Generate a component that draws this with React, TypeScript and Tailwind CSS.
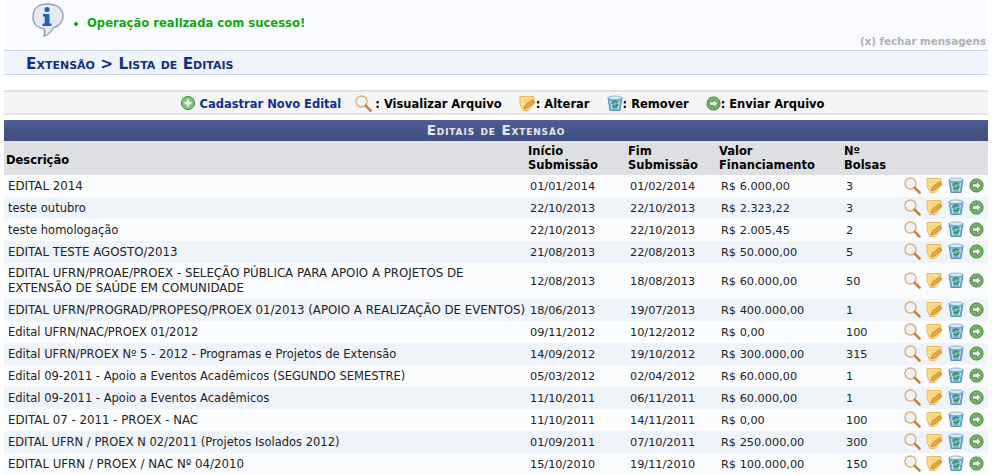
import React from 'react';

const rows = [
    ['EDITAL 2014', '01/01/2014', '01/02/2014', 'R$ 6.000,00', '3'],
    ['teste outubro', '22/10/2013', '22/10/2013', 'R$ 2.323,22', '3'],
    ['teste homologação', '22/10/2013', '22/10/2013', 'R$ 2.005,45', '2'],
    ['EDITAL TESTE AGOSTO/2013', '21/08/2013', '22/08/2013', 'R$ 50.000,00', '5'],
    ['EDITAL UFRN/PROAE/PROEX - SELEÇÃO PÚBLICA PARA APOIO A PROJETOS DE EXTENSÃO DE SAÚDE EM COMUNIDADE', '12/08/2013', '18/08/2013', 'R$ 60.000,00', '50'],
    ['EDITAL UFRN/PROGRAD/PROPESQ/PROEX 01/2013 (APOIO A REALIZAÇÃO DE EVENTOS)', '18/06/2013', '19/07/2013', 'R$ 400.000,00', '1'],
    ['Edital UFRN/NAC/PROEX 01/2012', '09/11/2012', '10/12/2012', 'R$ 0,00', '100'],
    ['Edital UFRN/PROEX Nº 5 - 2012 - Programas e Projetos de Extensão', '14/09/2012', '19/10/2012', 'R$ 300.000,00', '315'],
    ['Edital 09-2011 - Apoio a Eventos Acadêmicos (SEGUNDO SEMESTRE)', '05/03/2012', '02/04/2012', 'R$ 60.000,00', '1'],
    ['Edital 09-2011 - Apoio a Eventos Acadêmicos', '11/10/2011', '06/11/2011', 'R$ 60.000,00', '1'],
    ['EDITAL 07 - 2011 - PROEX - NAC', '11/10/2011', '14/11/2011', 'R$ 0,00', '100'],
    ['EDITAL UFRN / PROEX N 02/2011 (Projetos Isolados 2012)', '01/09/2011', '07/10/2011', 'R$ 250.000,00', '300'],
    ['EDITAL UFRN / PROEX / NAC Nº 04/2010', '15/10/2010', '19/11/2010', 'R$ 100.000,00', '150'],
];

function InfoIcon() {
    return (
        <svg width="34" height="36" viewBox="0 0 34 36">
            <path d="M16 2C7 2 2 7 2 15c0 7 5 11 11 12 1 2 1 5 0 7 4-1 7-4 9-8 6-2 10-6 10-12C32 6 25 2 16 2z" fill="#e4eaf6" stroke="#9aa3b5" strokeWidth="1.5" />
            <circle cx="16" cy="7.5" r="2.6" fill="#1f63ad" />
            <path d="M12 12h6.500v9.500h2V24h-9v-2.500h2.200v-7H12z" fill="#1f63ad" />
        </svg>
    );
}

function AddIcon() {
    return (
        <svg width="16" height="16" viewBox="0 0 16 16" className="shrink-0">
            <circle cx="8" cy="8" r="6.700" fill="#7cc576" stroke="#4f9a4c" />
            <path d="M6.800 4.500h2.400v2.300h2.300v2.400H9.200v2.300H6.800V9.200H4.500V6.800h2.300z" fill="#f2f8ee" />
        </svg>
    );
}

function ViewIcon() {
    return (
        <svg width="17" height="17" viewBox="0 0 17 17" className="shrink-0">
            <circle cx="6.500" cy="6.500" r="5.500" fill="#eef3f7" stroke="#dcae78" strokeWidth="1.400" />
            <path d="M10.800 10.800l4.700 4.700" stroke="#b98445" strokeWidth="2.600" strokeLinecap="round" />
        </svg>
    );
}

function EditIcon() {
    return (
        <svg width="17" height="17" viewBox="0 0 17 17" className="shrink-0">
            <path d="M1 1.500h14v7l-6 7H4L1 9z" fill="#f9dc86" stroke="#e9b968" />
            <path d="M5 5h6M5 8h4" stroke="#efc878" strokeWidth="0.800" />
            <path d="M5 14l1-3.500 7.500-6 2.500 2.500-7.500 6z" fill="#eaa63f" stroke="#bb7d2a" strokeWidth="0.700" />
        </svg>
    );
}

function RemoveIcon() {
    return (
        <svg width="16" height="17" viewBox="0 0 16 17" className="shrink-0">
            <path d="M1 2.500h14l-2 13H3z" fill="#79b2da" stroke="#5a8fb8" />
            <path d="M3.500 6l1.500 8.500M12.500 6L11 14.500" stroke="#cfe4f2" strokeWidth="1" />
            <ellipse cx="8" cy="2.800" rx="7" ry="1.800" fill="#dcebf5" stroke="#6c9cc0" strokeWidth="0.700" />
            <path d="M5.200 9a2.800 2.800 0 0 1 5-1.700M10.800 9a2.800 2.800 0 0 1-5 1.700" fill="none" stroke="#2f9a45" strokeWidth="1.800" />
        </svg>
    );
}

function SendIcon() {
    return (
        <svg width="15" height="15" viewBox="0 0 15 15" className="shrink-0">
            <circle cx="7.500" cy="7.500" r="6.600" fill="#6fb85f" stroke="#458c3e" />
            <path d="M7.500 3.200l4.300 4.300-4.300 4.300V9.300H3.500V5.700h4z" fill="#eef2ee" stroke="#555" strokeWidth="0.600" />
        </svg>
    );
}

export default function App() {
    return (
        <div className="h-[475px] w-[992px] overflow-hidden bg-white pl-1 pr-1 font-['DejaVu_Sans',Verdana,sans-serif] text-[11.3px] text-[#222]">
            <div className="relative flex h-[50px] bg-[#f9fbff]">
                <div className="ml-[27px] mt-0.5">
                    <InfoIcon />
                </div>
                <ul className="ml-[9px] mt-[15px] flex items-start text-[11.6px] font-bold text-[#11a80f]">
                    <li className="flex items-center gap-[9px]">
                        <span className="h-1 w-1 rounded-full bg-[#0a9a0a]" />
                        Operação realizada com sucesso!
                    </li>
                </ul>
                <span className="absolute right-0.5 top-[34px] text-[10.3px] font-bold text-[#b0b0b0]">(x) fechar mensagens</span>
            </div>

            <h2 className="flex h-[25px] items-center border-y border-[#c5d2ec] bg-[#eff3fb] pl-[22px] pt-[3px] text-[15.3px] font-bold text-[#0f2f80] [font-variant:small-caps]">
                Extensão &gt; Lista de Editais
            </h2>

            <div className="mt-[15px] flex h-[25px] items-center justify-center border-y-2 border-[#e2e2e2] bg-[#f5f5f5] pl-[13px] pt-[5px] text-[11.5px] font-bold text-black [&_svg]:mb-1">
                <span className="flex items-center gap-[3px] text-[#0f2f90]">
                    <AddIcon />
                    Cadastrar Novo Edital
                </span>
                <span className="ml-[14px] flex items-center gap-[3px]">
                    <ViewIcon />: Visualizar Arquivo
                </span>
                <span className="ml-[17px] flex items-center">
                    <EditIcon />: Alterar
                </span>
                <span className="ml-[17px] flex items-center">
                    <RemoveIcon />: Remover
                </span>
                <span className="ml-[17px] flex items-center">
                    <SendIcon />: Enviar Arquivo
                </span>
            </div>

            <table className="mt-[5px] w-[984px] table-fixed border-collapse">
                <colgroup>
                    <col className="w-[522px]" />
                    <col className="w-[100px]" />
                    <col className="w-[91px]" />
                    <col className="w-[125px]" />
                    <col className="w-[58px]" />
                    <col />
                </colgroup>
                <thead>
                    <tr>
                        <th colSpan={6} className="h-[21px] bg-gradient-to-b from-[#4f5f95] via-[#445487] to-[#404f82] text-center text-[13.5px] font-bold tracking-[0.85px] text-[#e6e9f2] [font-variant:small-caps]">
                            Editais de Extensão
                        </th>
                    </tr>
                    <tr className="h-[34px] bg-[#dedfe3] text-left text-[11.5px] font-bold leading-[14px] text-black">
                        <th className="pl-0.5 pt-[4px]">Descrição</th>
                        <th className="pl-0.5">Início<br />Submissão</th>
                        <th className="pl-0.5">Fim<br />Submissão</th>
                        <th className="pl-0.5">Valor<br />Financiamento</th>
                        <th className="pl-0.5">Nº<br />Bolsas</th>
                        <th />
                    </tr>
                </thead>
                <tbody>
                    {rows.map((row, i) => (
                        <tr key={row[0]} className={`leading-[15px] ${i % 2 ? 'bg-[#eff3fa]' : 'bg-[#fbfcfe]'} ${row[0].length > 80 ? 'h-[36px]' : 'h-[22px]'}`}>
                            <td className={`py-0 pl-1 ${row[0].length > 80 ? 'pr-[50px]' : 'pr-0'} ${row[0] === row[0].toUpperCase() ? 'text-[11.8px]' : 'text-[11.5px]'}`}>{row[0]}</td>
                            <td className="pl-1">{row[1]}</td>
                            <td className="pl-1">{row[2]}</td>
                            <td className="pl-1">{row[3]}</td>
                            <td className="pl-1">{row[4]}</td>
                            <td>
                                <div className="flex items-center gap-[5px] pb-[2px] pl-[4px]">
                                    <ViewIcon />
                                    <EditIcon />
                                    <RemoveIcon />
                                    <SendIcon />
                                </div>
                            </td>
                        </tr>
                    ))}
                </tbody>
            </table>
        </div>
    );
}
